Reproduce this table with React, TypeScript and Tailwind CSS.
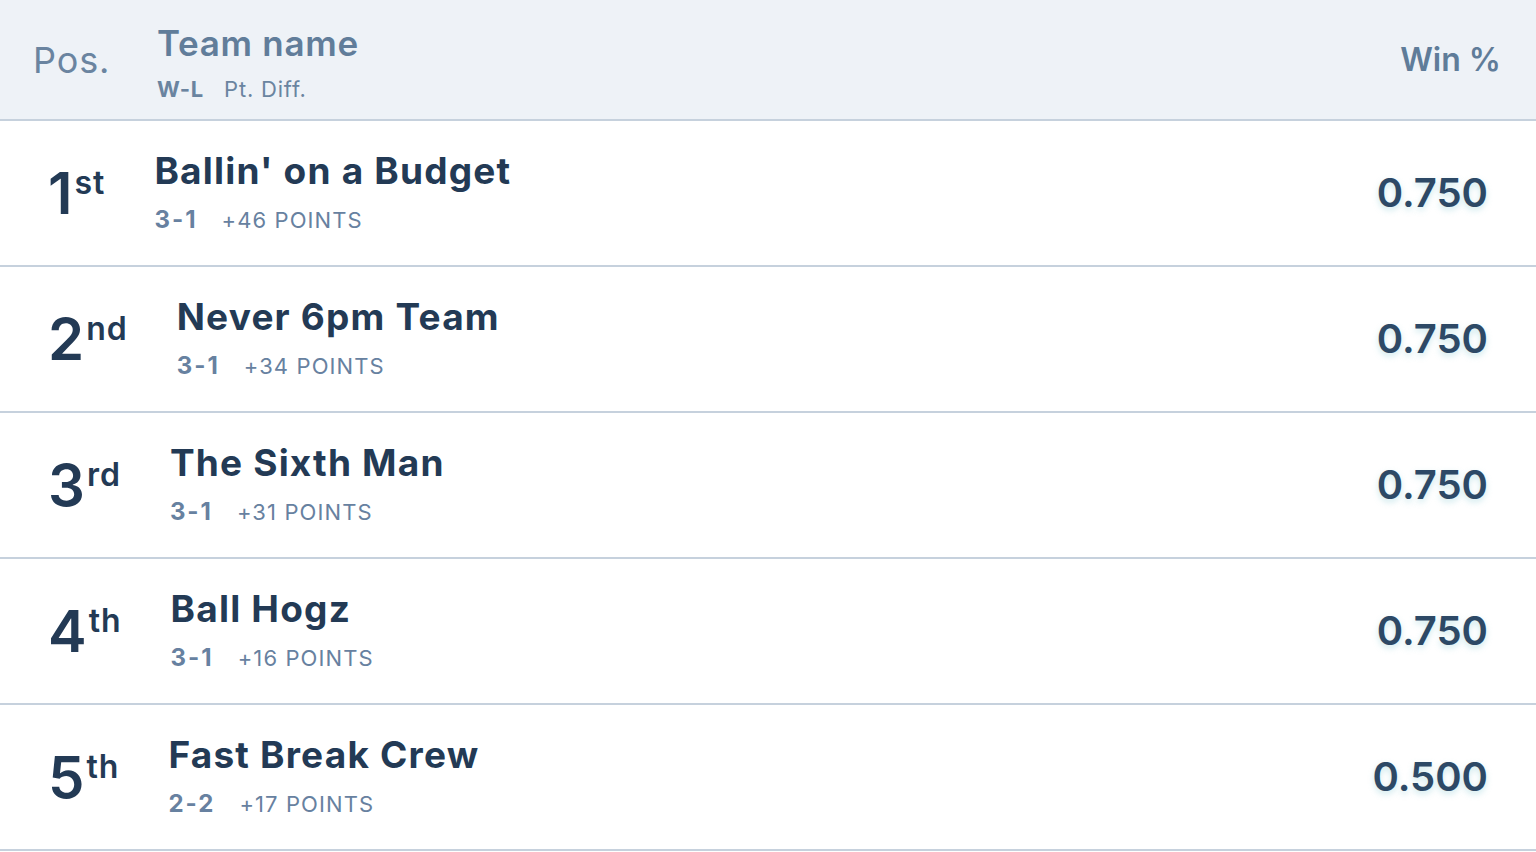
const teams = [
  { pos: "1", suffix: "st", name: "Ballin' on a Budget", record: "3-1", diff: "+46", pct: "0.750" },
  { pos: "2", suffix: "nd", name: "Never 6pm Team", record: "3-1", diff: "+34", pct: "0.750" },
  { pos: "3", suffix: "rd", name: "The Sixth Man", record: "3-1", diff: "+31", pct: "0.750" },
  { pos: "4", suffix: "th", name: "Ball Hogz", record: "3-1", diff: "+16", pct: "0.750" },
  { pos: "5", suffix: "th", name: "Fast Break Crew", record: "2-2", diff: "+17", pct: "0.500" },
];

export default function App() {
  return (
    <div className="min-h-screen bg-white font-['Inter',sans-serif]">
      <div className="flex h-[121px] items-center border-b-2 border-[#c6d1dd] bg-[#eef2f7] pl-[33px] pr-[35px]">
        <div className="w-[124px] text-[36px] tracking-wide text-[#6a84a0]">Pos.</div>
        <div className="flex-1 pt-[5px]">
          <div className="text-[35px] font-semibold leading-[42px] tracking-[0.7px] text-[#617d9a]">Team name</div>
          <div className="mt-[11px] flex items-center gap-[20px] text-[22px] leading-[28px] tracking-[0.8px] text-[#6a84a0]">
            <span className="font-bold">W-L</span>
            <span>Pt. Diff.</span>
          </div>
        </div>
        <div className="text-[32px] font-semibold text-[#5f7c99]">Win %</div>
      </div>
      {teams.map((t) => (
        <div
          key={t.pos}
          className="flex h-[146px] items-center border-b-2 border-[#c6d1dd] pl-12 pr-12"
        >
          <div className="flex items-center gap-[49px]">
            <div className="flex items-start text-[#233a55]">
              <span className="text-[58px] font-semibold leading-[58px]">{t.pos}</span>
              <span className="ml-[2px] mt-[4px] text-[32px] font-semibold leading-[30px] tracking-[1px]">{t.suffix}</span>
            </div>
            <div>
              <div className="text-[37px] font-bold leading-[42px] tracking-[1.2px] text-[#233a55]">{t.name}</div>
              <div className="mt-[12px] flex items-center gap-[24px] leading-[32px] text-[#6781a0]">
                <span className="text-[24px] font-bold tracking-[2px]">{t.record}</span>
                <span className="text-[22px] tracking-[1.1px]">{t.diff} POINTS</span>
              </div>
            </div>
          </div>
          <div className="ml-auto text-[40px] font-semibold text-[#2d4966] [text-shadow:0_3px_6px_rgba(110,190,200,0.35)]">
            {t.pct}
          </div>
        </div>
      ))}
    </div>
  );
}
